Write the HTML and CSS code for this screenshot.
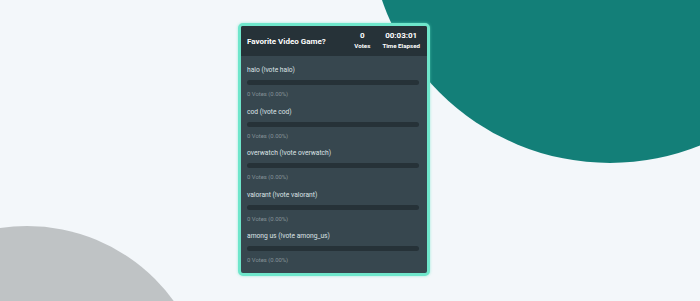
FILE: index.html
```html
<!DOCTYPE html>
<html lang="en">
<head>
    <meta charset="UTF-8">
    <meta name="viewport" content="width=device-width, initial-scale=1.0">
    <title>Poll</title>
    <link rel="stylesheet" href="styles.css">
</head>
<body>
    <div class="scene">
        <div class="blob blob-teal"></div>
        <div class="blob blob-gray"></div>

        <div class="page">
            <div class="poll">
                <div class="poll-header">
                    <div class="poll-title">Favorite Video Game?</div>
                    <div class="stat stat-votes">
                        <div class="stat-value">0</div>
                        <div class="stat-label">Votes</div>
                    </div>
                    <div class="stat">
                        <div class="stat-value">00:03:01</div>
                        <div class="stat-label">Time Elapsed</div>
                    </div>
                </div>

                <div class="poll-body">
                    <div class="option">
                        <div class="option-name">halo (!vote halo)</div>
                        <div class="bar"><div class="bar-fill" style="width: 0%"></div></div>
                        <div class="option-count">0 Votes (0.00%)</div>
                    </div>
                    <div class="option">
                        <div class="option-name">cod (!vote cod)</div>
                        <div class="bar"><div class="bar-fill" style="width: 0%"></div></div>
                        <div class="option-count">0 Votes (0.00%)</div>
                    </div>
                    <div class="option">
                        <div class="option-name">overwatch (!vote overwatch)</div>
                        <div class="bar"><div class="bar-fill" style="width: 0%"></div></div>
                        <div class="option-count">0 Votes (0.00%)</div>
                    </div>
                    <div class="option">
                        <div class="option-name">valorant (!vote valorant)</div>
                        <div class="bar"><div class="bar-fill" style="width: 0%"></div></div>
                        <div class="option-count">0 Votes (0.00%)</div>
                    </div>
                    <div class="option">
                        <div class="option-name">among us (!vote among_us)</div>
                        <div class="bar"><div class="bar-fill" style="width: 0%"></div></div>
                        <div class="option-count">0 Votes (0.00%)</div>
                    </div>
                </div>
            </div>
        </div>
    </div>
</body>
</html>
```

FILE: styles.css
```css
/* Base */
body {
    margin: 0;
    background-color: #f3f7fa;
    font-family: Roboto, "Liberation Sans", Arial, sans-serif;
}

.scene {
    position: relative;
    height: 301px;
    overflow: hidden;
}

/* Decorative background circles */
.blob {
    position: absolute;
    border-radius: 50%;
}

.blob-teal {
    width: 482px;
    height: 482px;
    left: 369px;
    top: -319px;
    background-color: #137f78;
}

.blob-gray {
    width: 362px;
    height: 362px;
    left: -154px;
    top: 226px;
    background-color: #bfc3c5;
}

.page {
    position: relative;
    padding: 23px 0 0 238px;
}

/* Poll card */
.poll {
    width: 186px;
    border: 3px solid #6fe6cb;
    border-radius: 5px;
    box-shadow: 0 0 3px rgba(100, 230, 200, 0.6);
    background-color: #37474f;
    overflow: hidden;
}

.poll-header {
    display: flex;
    align-items: center;
    height: 30px;
    padding: 0 7px 0 6px;
    background-color: #263238;
    color: #fff;
    font-weight: bold;
}

.poll-title {
    flex: 1;
    font-size: 8px;
}

.stat {
    text-align: center;
}

.stat-votes {
    margin-right: 12px;
}

.stat-value {
    font-size: 8px;
    line-height: 10px;
}

.stat-label {
    font-size: 6.2px;
    line-height: 10px;
}

/* Options */
.poll-body {
    display: flex;
    flex-direction: column;
    gap: 8.5px;
    padding: 9px 8px 9px 6px;
}

.option-name {
    color: #dce2e5;
    font-size: 6.7px;
    line-height: 10px;
}

.bar {
    margin-top: 5px;
    height: 5px;
    border-radius: 3px;
    background-color: #263238;
}

.bar-fill {
    height: 100%;
    border-radius: 3px;
    background-color: #6fe6cb;
}

.option-count {
    margin-top: 5px;
    color: #859298;
    font-size: 5.9px;
    line-height: 8px;
}
```
